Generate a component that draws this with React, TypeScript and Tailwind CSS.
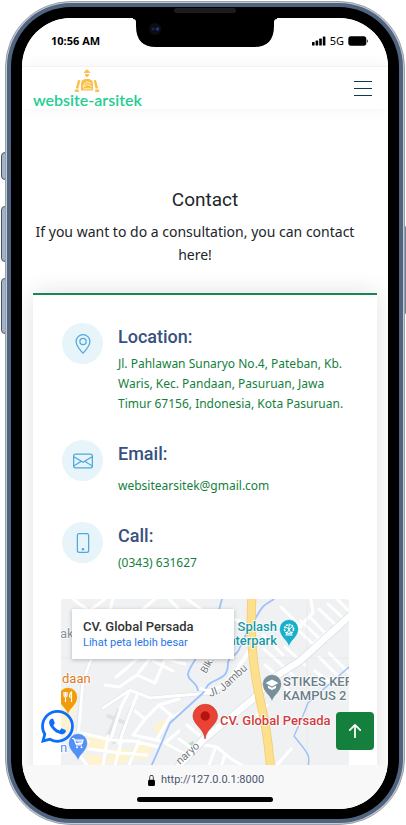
import type { ReactNode } from "react";
import { BsArrowUpShort, BsEnvelope, BsGeoAlt, BsLockFill, BsPhone, BsWhatsapp } from "react-icons/bs";

const BODY = "font-['Noto_Sans','Open_Sans',sans-serif]";

function StatusBar() {
  return (
    <div className="flex h-12 shrink-0 items-center justify-between bg-white pr-[20px] pb-[3px] pl-[29px] text-black">
      <span className="font-['Open_Sans',sans-serif] text-[11px] leading-4 font-bold">10:56 AM</span>
      <div className="flex items-center gap-1">
        <svg width="14" height="10" viewBox="0 0 14 10" aria-hidden="true">
          <rect x="0" y="6" width="2.6" height="3.5" rx="0.6" />
          <rect x="3.6" y="4.6" width="2.6" height="4.9" rx="0.6" />
          <rect x="7.2" y="2.6" width="2.6" height="6.9" rx="0.6" />
          <rect x="10.8" y="0.5" width="2.6" height="9" rx="0.6" />
        </svg>
        <span className="text-[11px] leading-4">5G</span>
        <svg width="20" height="10" viewBox="0 0 20 10" aria-hidden="true">
          <rect x="0.3" y="0.3" width="18" height="9.4" rx="2.6" />
          <path d="M18.9 3.2c1.1.5 1.1 3.1 0 3.6z" />
        </svg>
      </div>
    </div>
  );
}

function Notch() {
  return (
    <svg
      className="absolute top-4 left-1/2 -translate-x-1/2"
      width="144"
      height="30"
      viewBox="0 0 144 30"
      aria-hidden="true"
    >
      <path d="M0 0H144V1Q141 1 141 4V8Q141 29 121 29H23Q3 29 3 8V4Q3 1 0 1Z" fill="#000" />
      <circle cx="22" cy="11" r="6" fill="#0b0d14" />
      <circle cx="20" cy="11" r="1.6" fill="#1b2450" />
      <circle cx="24.5" cy="11" r="1.8" fill="#253380" />
    </svg>
  );
}

function Logo() {
  return (
    <a href="#home" className="flex flex-col items-center">
      <svg width="26" height="24" viewBox="0 0 26 24" aria-hidden="true">
        <g fill="#fbc04a">
          <path d="M10.400 3Q10.600 1.400 12.300 1L13 0l.7 1Q15.400 1.400 15.600 3L16.400 4H9.600Z" />
          <path d="M10.800 5h4.400q-.2 2.600-2.200 3.200Q11 7.600 10.800 5Z" />
          <path d="M7 21.500V15Q7 10.200 11.500 10h3Q19 10.200 19 15V21.500Z" />
          <path d="M4 11l2.400.3L4.400 19.600H1.800ZM22 11l-2.400.3L21.600 19.600h2.600Z" />
          <path d="M.8 20.400h4V23h-4ZM21.200 20.400h4V23h-4Z" />
        </g>
        <path
          d="M9 19Q9.500 14 13 13l4 1.500M10 17.500L13.500 15.500L17.500 17.500M9.500 19.800h8"
          stroke="#fff6dc"
          strokeWidth="0.900"
          fill="none"
        />
      </svg>
      <span className="font-['Lato',sans-serif] text-[16px] leading-[14px] font-semibold text-[#22cd8f]">
        website-arsitek
      </span>
    </a>
  );
}

function Header() {
  return (
    <header className="z-10 flex h-[43px] shrink-0 items-center justify-between border-t border-[#f2f2f2] bg-white pr-4 pl-[11px] shadow-[0_0_16px_rgba(0,0,0,0.05)]">
      <Logo />
      <button type="button" aria-label="Menu" className="flex w-[18px] flex-col gap-[6px]">
        <span className="h-px w-full bg-[#0b3a55]" />
        <span className="h-px w-full bg-[#0b3a55]" />
        <span className="h-px w-full bg-[#0b3a55]" />
      </button>
    </header>
  );
}

function InfoItem({ icon, title, children }: { icon: ReactNode; title: string; children: ReactNode }) {
  return (
    <div className="flex gap-[15px] pl-px">
      <div className="flex size-[41px] shrink-0 items-center justify-center rounded-full bg-[#e7f4fa] text-xl text-[#4fa9dd]">
        {icon}
      </div>
      <div className="min-w-0 flex-1">
        <h3 className="font-['Roboto',sans-serif] text-lg leading-7 font-medium text-[#37517e]">{title}</h3>
        {children}
      </div>
    </div>
  );
}

function Pin({ x, y, color, children }: { x: number; y: number; color: string; children?: ReactNode }) {
  return (
    <g transform={`translate(${x} ${y})`}>
      <path d="M0 18C-1.500 11-9.500 8-9.500 0A9.500 9.500 0 0 1 9.500 0C9.500 8 1.500 11 0 18Z" fill={color} stroke="#fff" strokeWidth="0.500" />
      {children}
    </g>
  );
}

function MapDrawing() {
  return (
    <svg
      className="block h-full w-full font-['Roboto',sans-serif]"
      viewBox="0 0 288 210"
      preserveAspectRatio="xMinYMin slice"
      aria-label="Map of CV. Global Persada"
    >
      <rect width="288" height="210" fill="#eff1f3" />
      <path d="M4 90L16 96L9 136H-2V100ZM26 138H47V151H24ZM50 150H70L66 164H46ZM24 154L41 157L50 170H30Z" fill="#fdf3d0" />
      <path d="M73 146H92L86 160H70ZM92 128L101 120L107 125L98 136Z" fill="#fdf3d0" />
      <path d="M127 145L132 142L135 147L129 149Z" fill="#b9dfc3" />

      <g fill="none" stroke="#dfe2e6" strokeWidth="4" strokeLinecap="round" strokeLinejoin="round">
        <path d="M31 58L22 82L17 130M42 109L69 91L89 99L149 94M71 109L59 140M47 117L62 123M53 143L47 137L58 111" />
      </g>
      <g fill="none" stroke="#fff" strokeWidth="3" strokeLinecap="round" strokeLinejoin="round">
        <path d="M31 58L22 82L17 138L28 143M42 109L69 91L89 99L149 94M69 91L60 108L50 139M76 96L66 122L58 144" />
        <path d="M52 0L48 14M12 0L28 12L44 0M80 12L96 -2M108 0L118 10M126 0L140 10" />
        <path d="M44 86L58 88L76 76L90 58M55 78L66 69L80 56M76 76L94 84L104 60M92 62L112 72M104 60L124 65" />
        <path d="M74 112L84 120L98 106L118 100M84 120L72 136L100 142M98 106L112 118L122 112M110 116L96 140M118 132L104 144L126 156" />
        <path d="M20 134L50 141L72 142L98 148M47 137L42 166M28 150L60 154L86 156M60 144L54 166M78 142L68 166M12 148L26 166" />
        <path d="M126 126L138 136M118 140L132 150M144 146L156 148L170 160L184 168M154 150L148 166M164 156L160 168" />
        <path d="M220 8L240 28M250 0L252 14L236 30M234 28L252 45L268 32M240 22L258 39M249 18L264 34M258 10L276 27M267 5L283 20M276 0L288 12" />
        <path d="M202 36L222 56M203 50L224 69M212 58L234 78M204 66L218 78M224 48L244 66M166 18L184 24M178 66L190 54" />
        <path d="M224 88L232 96M254 72L270 84M268 54L288 74M258 58L276 76M196 116L206 106M216 166L230 150" />
      </g>
      <g fill="none" stroke="#e1e3e6" strokeWidth="1">
        <path d="M0 59H288M246 0V210" opacity="0.500" />
      </g>

      <g fill="none" stroke="#9dc1fb" strokeWidth="1.800" strokeLinejoin="round">
        <path d="M213 0C205 6 203 4 197 15C190 26 184 36 179 48C175 60 168 55 167 64C167 82 155 78 147 86L142 94L109 124C102 140 96 155 88 172" />
        <path d="M136 57C132 66 127 70 127 76C128 83 136 82 137 92" />
        <path d="M161 0L158 11" />
        <path d="M288 68L265 88L247 104L239 124L233 137L241 147C248 156 249 158 247 168" strokeWidth="1.400" />
      </g>

      <path d="M292 14L239 62L212 79L192 100L142 141L114 171" fill="none" stroke="#dcdfe3" strokeWidth="8" />
      <path d="M292 14L239 62L212 79L192 100L142 141L114 171" fill="none" stroke="#fff" strokeWidth="6.500" />
      <path d="M139 89C156 100 174 75 188 51" fill="none" stroke="#fff" strokeWidth="3" />
      <path d="M191 -2C188 40 193 75 200 105S207 145 210 172" fill="none" stroke="#f2cb6b" strokeWidth="9" />
      <path d="M191 -2C188 40 193 75 200 105S207 145 210 172" fill="none" stroke="#fde08d" strokeWidth="7.500" />

      <g stroke="#fff" strokeWidth="1.500" paintOrder="stroke" strokeLinejoin="round" fontSize="13" fontWeight="500">
        <text x="-1" y="39" fill="#8496a3" fontWeight="400">ak</text>
        <text x="1" y="84" fill="#e07a1c" fontWeight="400">daan</text>
        <text x="-1" y="153" fill="#5491f5" fontWeight="400">n</text>
        <text x="216" y="32" textAnchor="end" fill="#1698a8">Splash</text>
        <text x="216" y="46" textAnchor="end" fill="#1698a8">nterpark</text>
        <text x="222" y="87" fill="#6a7d89">STIKES KEP</text>
        <text x="222" y="101" fill="#6a7d89">KAMPUS 2</text>
        <text x="159" y="126" fill="#d23b3d">CV. Global Persada</text>
        <g fill="#757b80" fontSize="11" fontWeight="400">
          <text transform="translate(145 75) rotate(-60)" fontSize="10">Blk.</text>
          <text transform="translate(149 98) rotate(-20)">Jl.</text>
          <text transform="translate(162 93) rotate(-43)">Jambu</text>
          <text transform="translate(119 166) rotate(-42)">naryo</text>
        </g>
      </g>

      <Pin x={7} y={98} color="#f29b0b">
        <path d="M-4-5v3.500q0 1.500 1.500 1.500V5M-2.500-5v4M-1-5v3.500Q-1 0-2.500 0M3.500 5V-5Q1.500-4 1.500 0H3.500" stroke="#fff" strokeWidth="1.200" fill="none" />
      </Pin>
      <Pin x={17} y={144} color="#5491f5">
        <path d="M-6-4.500h2L-1.500 2H4M-3.500-3H5L4 .500H-2.200Z" stroke="#fff" strokeWidth="1.200" fill="#fff" fillOpacity="0.600" />
        <circle cx="-1" cy="4.300" r="1" fill="#fff" />
        <circle cx="3.500" cy="4.300" r="1" fill="#fff" />
      </Pin>
      <Pin x={228} y={30} color="#18b0c8">
        <circle r="4.500" fill="none" stroke="#fff" strokeWidth="1.600" strokeDasharray="2 0.900" />
        <path d="M0-4V0M-3.500-2L0 0L3.500-2M0 0L-2.500 6M0 0L2.500 6M-3.500 6H3.500" fill="none" stroke="#fff" strokeWidth="1" />
      </Pin>
      <Pin x={211} y={85} color="#78909c">
        <path d="M-6.500-1L0-4.500L6.500-1L0 2.500Z" fill="#fff" />
        <path d="M-4 1.500L0 3.700L4 1.500V4L0 6L-4 4Z" fill="#fff" />
      </Pin>
      <path d="M144 140C143 129 132 126 132 116.500A12.300 12.300 0 0 1 156.500 116.500C156.500 126 145.500 129 144 140Z" fill="#ea4335" stroke="#c5362b" strokeWidth="0.700" />
      <circle cx="144.200" cy="117" r="4.700" fill="#b31412" />
    </svg>
  );
}

function MapPanel() {
  return (
    <div className="relative mt-[26px] aspect-[288/210] w-full overflow-hidden rounded-t-[3px] font-['Roboto',sans-serif]">
      <MapDrawing />
      <div className="absolute top-[10px] left-[11px] h-[50px] w-[162px] bg-white px-[11px] pt-[10px] shadow-[0_1px_4px_rgba(0,0,0,0.25)]">
        <p className="text-[13px] leading-4 font-medium whitespace-nowrap text-[#333]">CV. Global Persada</p>
        <a href="#map" className="block text-[11px] leading-4 whitespace-nowrap text-[#2a76e8]">
          Lihat peta lebih besar
        </a>
      </div>
    </div>
  );
}

function ContactPage() {
  return (
    <main className="relative min-h-0 flex-1 overflow-hidden bg-white px-[11px]">
      <h2 className="pt-[76px] text-center font-['Roboto',sans-serif] text-[19px] leading-[30px] text-[#212529]">
        Contact
      </h2>
      <p className="mt-[5px] pr-5 text-center text-[14px] leading-[23px] text-[#212529]">
        If you want to do a consultation, you can contact here!
      </p>
      <section className="mt-[27px] border-t-2 border-[#198754] bg-white p-7 shadow-[0_0_24px_rgba(0,0,0,0.12)]">
        <div className="flex flex-col gap-[26px] text-[12px] leading-5 text-[#15803d]">
          <InfoItem icon={<BsGeoAlt />} title="Location:">
            <p className="mt-[3px]">
              Jl. Pahlawan Sunaryo No.4, Pateban, Kb. Waris, Kec. Pandaan, Pasuruan, Jawa Timur 67156, Indonesia, Kota
              Pasuruan.
            </p>
          </InfoItem>
          <InfoItem icon={<BsEnvelope />} title="Email:">
            <p className="mt-2">websitearsitek@gmail.com</p>
          </InfoItem>
          <InfoItem icon={<BsPhone />} title="Call:">
            <p className="mt-[3px]">(0343) 631627</p>
          </InfoItem>
        </div>
        <MapPanel />
      </section>

      <a href="#whatsapp" aria-label="WhatsApp" className="absolute bottom-[22px] left-[19px] text-[33px] text-[#0d6efd]">
        <BsWhatsapp />
      </a>
      <button
        type="button"
        aria-label="Back to top"
        className="absolute right-[14px] bottom-[15px] flex size-[38px] items-center justify-center rounded bg-[#15803d] text-[28px] text-white"
      >
        <BsArrowUpShort />
      </button>
    </main>
  );
}

function AddressBar() {
  return (
    <footer className="flex h-11 shrink-0 flex-col items-center justify-between bg-[#f8f8f8] pt-[6px] pb-[7px]">
      <div className="flex items-center gap-1 font-['Roboto',sans-serif] text-[11px] leading-[18px] text-[#4a5470]">
        <BsLockFill className="text-[11px] text-black" />
        <span>http://127.0.0.1:8000</span>
      </div>
      <div className="h-[5px] w-[136px] rounded-full bg-black" />
    </footer>
  );
}

export default function App() {
  return (
    <div className={`relative h-screen bg-white pt-px pr-px pl-[5px] ${BODY}`}>
      <span className="absolute top-[152px] left-px h-7 w-[5px] rounded-l-sm border border-[#4b5566] bg-[#a3b3c9]" />
      <span className="absolute top-[206px] left-px h-14 w-[5px] rounded-l-sm border border-[#4b5566] bg-[#a3b3c9]" />
      <span className="absolute top-[278px] left-px h-14 w-[5px] rounded-l-sm border border-[#4b5566] bg-[#a3b3c9]" />
      <span className="absolute top-[225px] right-0 h-[90px] w-[3px] rounded-r-sm bg-[#6d7a8c]" />
      <div className="relative h-full rounded-[66px] border border-[#9a9fa8] bg-[#c3cad6] p-px">
        <div className="h-full rounded-[64px] bg-[#50647f] p-1">
          <div className="h-full rounded-[60px] bg-black px-[11px] pt-[11px] pb-[10px]">
            <div className="flex h-full flex-col overflow-hidden rounded-[49px] bg-white">
              <StatusBar />
              <Header />
              <ContactPage />
              <AddressBar />
            </div>
          </div>
        </div>
        <span className="absolute top-[6px] left-1/2 h-[5px] w-[62px] -translate-x-1/2 rounded-full bg-[#1c1c1c]" />
        <Notch />
      </div>
    </div>
  );
}
